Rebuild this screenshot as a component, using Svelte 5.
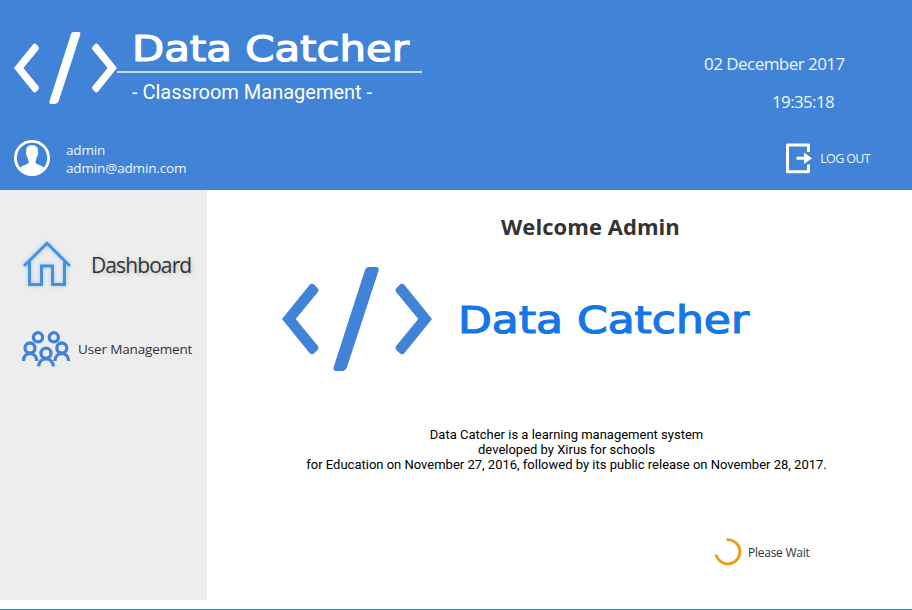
<script>
  const date = '02 December 2017';
  const time = '19:35:18';
  const user = { name: 'admin', email: 'admin@admin.com' };
</script>

{#snippet logo(cls)}
  <svg class={cls} viewBox="0 0 150 104" preserveAspectRatio="none" fill="currentColor" aria-hidden="true">
    <path d="M0 52 27.5 18Q30 15.5 32.5 18L35.5 21Q37.5 23.5 35.5 25.5L13.7 52 35.5 78.5Q37.5 81 35.5 83L32.5 86Q30 88.5 27.5 86Z" />
    <path d="M87 0H94Q97.5 0 96.5 4L65 100Q63.7 104 60 104H54Q50.7 104 51.7 100L83 3Q84 0 87 0Z" />
    <path d="M150 52 122.5 18Q120 15.5 117.5 18L114.5 21Q112.5 23.5 114.5 25.5L136.3 52 114.5 78.5Q112.5 81 114.5 83L117.5 86Q120 88.5 122.5 86Z" />
  </svg>
{/snippet}

{#snippet wordmark(cls, width)}
  <svg class="wordmark {cls}" {width} height="42" role="img">
    <text x="0" y="34" textLength={width} lengthAdjust="spacingAndGlyphs">Data Catcher</text>
  </svg>
{/snippet}

<div class="app">
  <header>
    <div class="top">
      {@render logo('logo-small')}
      <div class="brand">
        {@render wordmark('light', 277)}
        <div class="rule"></div>
        <div class="tagline">- Classroom Management -</div>
      </div>
      <div class="clock">
        <div class="date">{date}</div>
        <div class="time">{time}</div>
      </div>
    </div>
    <div class="account">
      <svg class="avatar" viewBox="0 0 36 36" aria-hidden="true">
        <circle cx="18" cy="18" r="16.6" fill="none" stroke="#fff" stroke-width="2.8" />
        <path fill="#fff" d="M12.2 11C12 7.2 14 5.3 18 5.3S24.3 7.5 23.9 11C24.5 13.5 24 16 22.6 17.5C22.4 19.5 21.5 20.8 21.5 23C24 24.8 28 25.4 30.8 28.4A16 16 0 0 1 5.2 28.4C8 25.4 12.5 24.8 14.8 23C14.8 20.8 13.8 19.5 13.5 17.5C12 16 11.6 13.3 12.2 11Z" />
      </svg>
      <div class="identity">
        <div>{user.name}</div>
        <div>{user.email}</div>
      </div>
      <button class="logout">
        <svg width="27" height="31" viewBox="0 0 27 31" aria-hidden="true">
          <path fill="none" stroke="#fff" stroke-width="3" stroke-linejoin="round" d="M22.5 9V1.9H1.5V28.7H22.5V21.5" />
          <path fill="#fff" d="M10.5 13.8H18V9.5L26 15.3 18 21V16.8H10.5Z" />
        </svg>
        <span>LOG OUT</span>
      </button>
    </div>
  </header>

  <div class="body">
    <nav>
      <div class="item dashboard">
        <svg width="48" height="46" viewBox="0 0 48 46" fill="none" stroke="#4492df" stroke-width="3" aria-hidden="true">
          <path d="M1 25 24 2.3 47 25" />
          <path d="M6.5 21V43.5H18.5V25H29.5V43.5H41.5V21" />
        </svg>
        <span>Dashboard</span>
      </div>
      <div class="item users">
        <svg width="49" height="36" viewBox="0 0 49 36" fill="none" stroke="#4083d7" stroke-width="3.3" aria-hidden="true">
          <circle cx="16" cy="6.3" r="4.6" />
          <circle cx="31.8" cy="6.3" r="4.6" />
          <circle cx="8" cy="17" r="5" />
          <circle cx="39.8" cy="17" r="5" />
          <circle cx="24" cy="22.2" r="5" />
          <path d="M1.5 30C1.5 25.5 4.2 22.5 8 22.5S14.7 25.5 14.9 30" />
          <path d="M32.9 30C33.1 25.5 36 22.5 39.8 22.5S46.5 25.5 46.5 30" />
          <path d="M16.7 35.4C16.9 30.8 20 27.9 24 27.9S31.1 30.8 31.3 35.4" />
        </svg>
        <span>User Management</span>
      </div>
    </nav>

    <main>
      <h1>Welcome Admin</h1>
      <div class="hero">
        {@render logo('logo-large')}
        {@render wordmark('blue', 291)}
      </div>
      <p>
        Data Catcher is a learning management system<br />
        developed by Xirus for schools<br />
        for Education on November 27, 2016, followed by its public release on November 28, 2017.
      </p>
      <div class="wait">
        <svg width="28" height="28" viewBox="0 0 28 28" aria-hidden="true">
          <path fill="none" stroke="#ee9b16" stroke-width="2.8" d="M12.5 1.7A12.1 12.1 0 1 1 2 16.5" />
        </svg>
        <span>Please Wait</span>
      </div>
    </main>
  </div>
  <footer></footer>
</div>

<style>
  .app {
    width: 912px;
    height: 610px;
    display: flex;
    flex-direction: column;
    background: #fff;
    overflow: hidden;
    font-family: 'Open Sans', 'Noto Sans', sans-serif;
    white-space: nowrap;
  }
  svg { display: block; flex: none; }
  header {
    height: 190px;
    background: #4083d7;
    color: #fff;
    flex: none;
  }
  .top {
    display: flex;
    height: 138px;
    padding-left: 14px;
  }
  .logo-small { width: 103px; height: 72px; margin-top: 32px; }
  .brand { width: 305px; padding-top: 27px; }
  .wordmark {
    overflow: visible;
    font-family: 'DejaVu Sans', sans-serif;
    font-size: 36px;
  }
  .light { margin-left: 15px; fill: #fff; stroke: #fff; stroke-width: 1.2px; }
  .blue { margin: 32px 0 0 26px; font-size: 37px; fill: #1577e6; stroke: #1577e6; stroke-width: 1.2px; }
  .rule { height: 2px; margin-top: 2px; background: #c5d5ed; }
  .tagline {
    margin: 7px 0 0 15px;
    font: 20px/24px Roboto, sans-serif;
  }
  .clock {
    flex: 1;
    padding-top: 52px;
    font-size: 17px;
    line-height: 24px;
    color: #eef4fc;
  }
  .date { margin-left: 282px; letter-spacing: -0.54px; }
  .time { margin: 14px 0 0 350px; letter-spacing: -0.65px; }
  .account { display: flex; padding: 2px 42px 0 14px; align-items: flex-start; }
  .avatar { width: 36px; height: 36px; }
  .identity {
    margin: 1px 0 0 16px;
    font-size: 13.5px;
    line-height: 18px;
    letter-spacing: -0.15px;
    color: #eef4fc;
  }
  .logout {
    display: flex;
    align-items: center;
    gap: 7px;
    margin: 3px 0 0 auto;
    padding: 0;
    border: 0;
    background: none;
    color: #eef4fc;
    font: 12.5px/20px 'Open Sans', sans-serif;
    letter-spacing: -0.64px;
  }
  .body { display: flex; height: 419px; }
  nav {
    width: 207px;
    height: 410px;
    background: #ededed;
    color: #333;
    flex: none;
  }
  .item { display: flex; align-items: center; }
  .dashboard {
    padding: 51px 0 0 23px;
    gap: 20px;
    font-size: 21px;
    letter-spacing: -0.9px;
    line-height: 46px;
    text-shadow: 1px 1px 4px #bbb;
  }
  .dashboard svg { filter: drop-shadow(0 0 2px #9bc4ee); }
  .dashboard span { padding-top: 2px; line-height: 44px; }
  .users {
    padding: 44px 0 0 22px;
    gap: 7px;
    font-size: 13.5px;
    letter-spacing: -0.14px;
    line-height: 36px;
  }
  main { flex: 1; }
  h1 {
    margin: 19px 0 0 294px;
    font-size: 22px;
    line-height: 34px;
    letter-spacing: 0.06px;
    font-weight: 700;
    color: #333;
  }
  .hero { display: flex; margin: 24px 0 0 75px; }
  .logo-large { width: 150px; height: 104px; color: #4083d7; }
  p {
    width: 719px;
    margin: 56px 0 0;
    text-align: center;
    font: 13px/15px Roboto, sans-serif;
    color: #000;
  }
  .wait {
    display: flex;
    align-items: center;
    gap: 6px;
    margin: 66px 0 0 507px;
    font-size: 12px;
    letter-spacing: -0.25px;
    line-height: 26px;
    color: #333;
  }
  .wait span { padding-top: 2px; }
  footer { height: 1px; background: #1f7ec6; }
</style>
